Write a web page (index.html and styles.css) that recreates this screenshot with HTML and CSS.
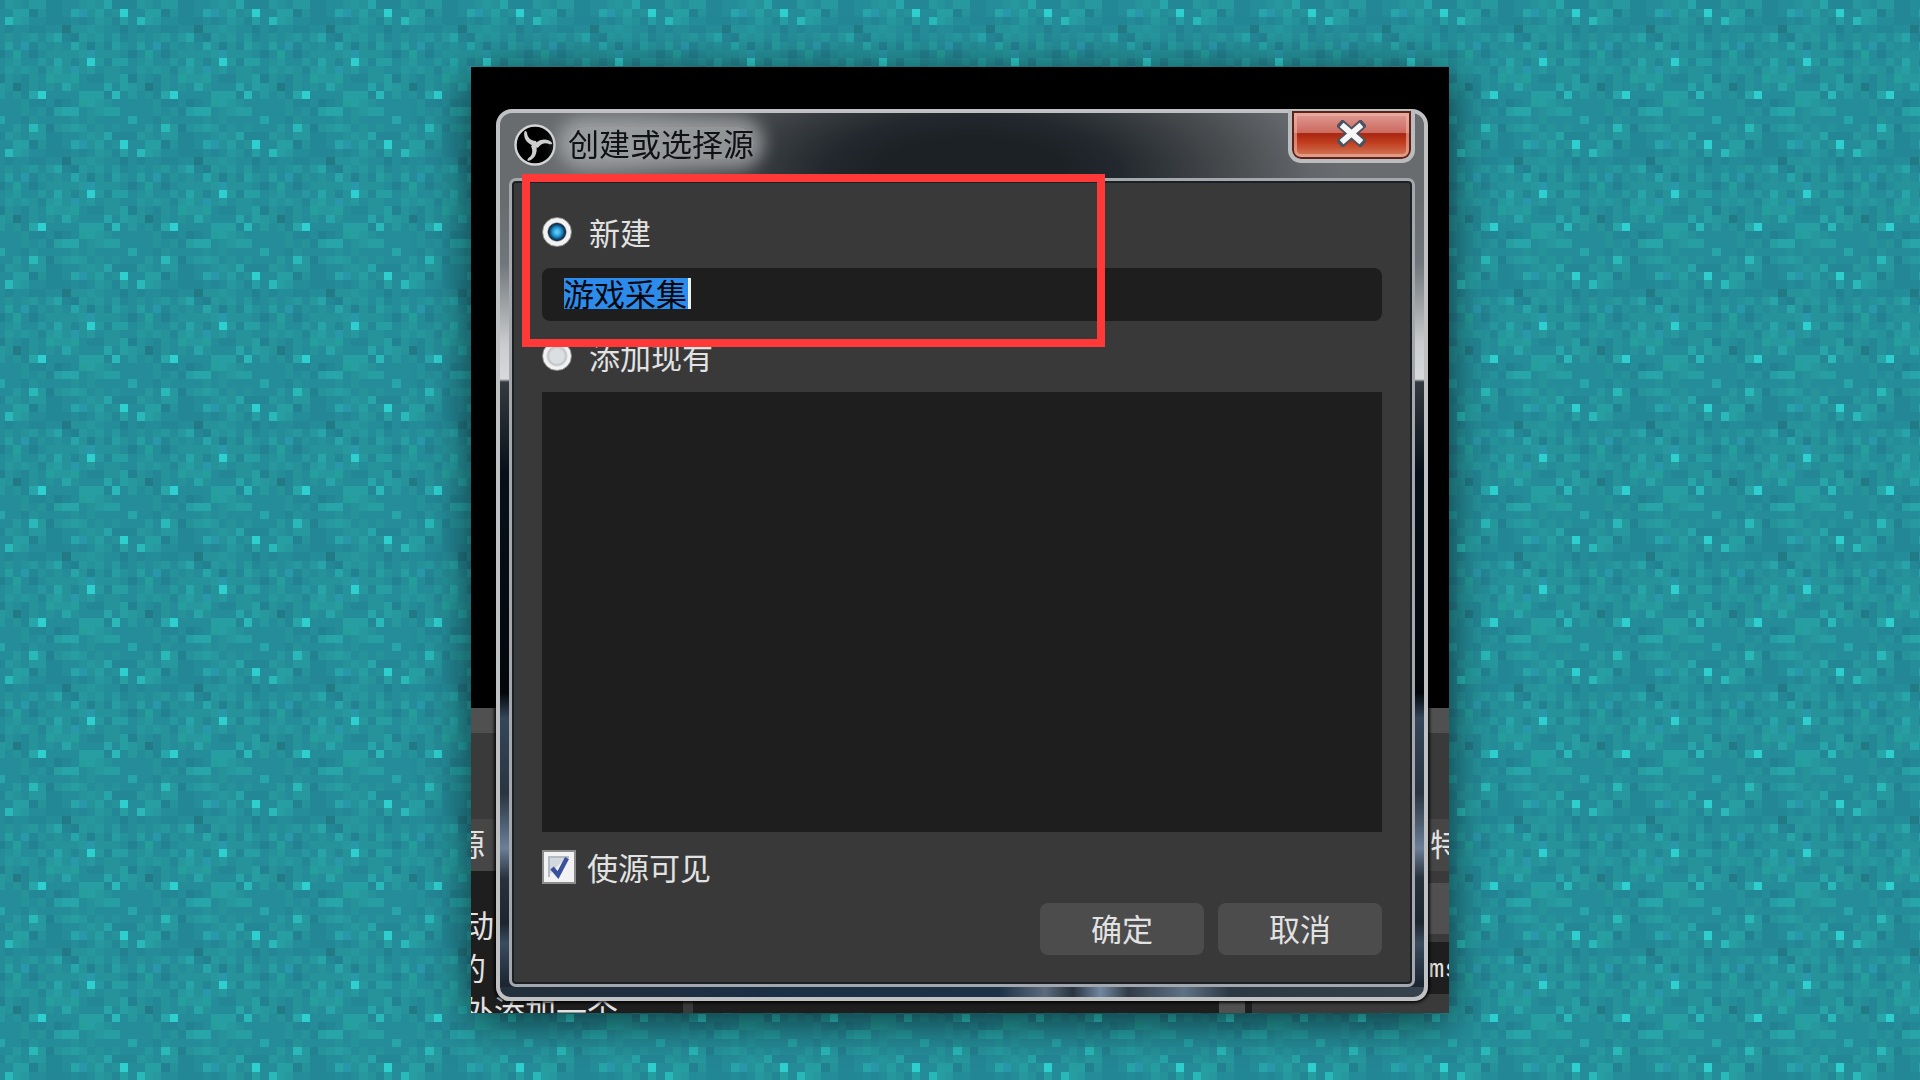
FILE: index.html
```
<!DOCTYPE html>
<html lang="zh-CN">
<head>
  <meta charset="utf-8">
  <meta name="viewport" content="width=device-width, initial-scale=1">
  <title>创建或选择源</title>
  <link rel="stylesheet" href="styles.css">
</head>
<body>
  <canvas class="mosaic" aria-hidden="true"></canvas>
  <main class="capture">
    <div class="backdrop" aria-hidden="true">
      <div class="preview"></div>
      <div class="splitter"></div>
      <div class="toolbar"></div>
      <div class="docks">
        <section class="dock dock-sources">
          <div class="dock-title">源</div>
          <div class="dock-body">
            <p>动</p>
            <p>的</p>
            <p>外添加一个</p>
          </div>
        </section>
        <section class="dock dock-mixer"></section>
        <section class="dock-grip"></section>
        <section class="dock dock-effects">
          <div class="dock-title">特</div>
          <div class="dock-select"></div>
          <div class="dock-field">ms</div>
        </section>
      </div>
    </div>

    <form class="dialog" onsubmit="return false">
      <header class="titlebar">
        <svg class="logo" viewBox="0 0 42 42" aria-hidden="true">
          <circle cx="21" cy="21" r="19.5" fill="#000" stroke="#d4d5d6" stroke-width="2.4"/>
          <g fill="#cfcfcf">
            <path d="M19 21.500C12 19 9 13 10.500 7.500C11.500 6 13 7.500 13.200 10C13.800 13.500 16.500 16.500 22 17L23.500 21Z"/>
            <path d="M19 21.500C12 19 9 13 10.500 7.500C11.500 6 13 7.500 13.200 10C13.800 13.500 16.500 16.500 22 17L23.500 21Z" transform="rotate(120 21 21)"/>
            <path d="M19 21.500C12 19 9 13 10.500 7.500C11.500 6 13 7.500 13.200 10C13.800 13.500 16.500 16.500 22 17L23.500 21Z" transform="rotate(240 21 21)"/>
          </g>
        </svg>
        <h1 class="title">创建或选择源</h1>
        <button class="close" type="button" aria-label="关闭">
          <svg viewBox="0 0 30 28" aria-hidden="true">
            <path d="M6 6L24 22M24 6L6 22" fill="none" stroke="#4d5260" stroke-width="10" stroke-linecap="square"/>
            <path d="M7 7L23 21M23 7L7 21" fill="none" stroke="#f6f6f6" stroke-width="6" stroke-linecap="square"/>
          </svg>
        </button>
      </header>
      <div class="panel">
        <label class="option"><input class="radio" type="radio" name="mode" checked>新建</label>
        <input class="name" type="text" value="游戏采集" aria-label="名称">
        <label class="option"><input class="radio" type="radio" name="mode">添加现有</label>
        <div class="list" role="listbox" aria-label="现有源"></div>
        <label class="option option-check"><input class="check" type="checkbox" checked>使源可见</label>
        <div class="actions">
          <button class="action" type="submit">确定</button>
          <button class="action" type="button">取消</button>
        </div>
        <div class="highlight" aria-hidden="true"></div>
      </div>
    </form>
  </main>
  <script src="mosaic.js"></script>
</body>
</html>
```
FILE: styles.css
```
* {
  box-sizing: border-box;
}

body {
  margin: 0;
  min-height: 100vh;
  padding: 67px 24px;
  display: flex;
  justify-content: center;
  background: #25929c;
  font: 31px/40px "Noto Sans CJK SC", sans-serif;
  color: #e2e2e2;
}

button,
input {
  font: inherit;
  color: inherit;
  margin: 0;
}

.mosaic {
  position: fixed;
  inset: 0;
  width: 100%;
  height: 100%;
}

.capture {
  position: relative;
  display: flex;
  width: 100%;
  max-width: 978px;
  background: #000;
  box-shadow: 0 8px 40px rgba(0, 0, 0, 0.65);
}

/* Main window behind the dialog */
.backdrop {
  position: absolute;
  inset: 0;
  display: flex;
  flex-direction: column;
  overflow: hidden;
}

.preview {
  flex: 1;
}

.splitter {
  height: 25px;
  background: #505050;
}

.toolbar {
  height: 86px;
  background: #3a3a3a;
}

.docks {
  display: flex;
  height: 194px;
  background: #1e1e1e;
}

.dock {
  overflow: hidden;
}

.dock p {
  margin: 0;
}

.dock-title {
  height: 52px;
  padding-top: 4px;
  background: #464646;
}

.dock-sources {
  width: 212px;
}

.dock-sources .dock-title {
  text-indent: -17px;
}

.dock-body {
  padding-top: 31px;
  line-height: 43px;
  text-indent: -8px;
  white-space: nowrap;
}

.dock-body p:nth-child(2) {
  text-indent: -16px;
}

.dock-mixer {
  flex: 1;
  border-left: 10px solid #3a3a3a;
}

.dock-grip {
  width: 26px;
  background: #505050;
}

.dock-effects {
  width: 204px;
  border-left: 7px solid #1e1e1e;
  background: #3a3a3a;
  direction: rtl;
}

.dock-effects .dock-title {
  text-indent: -12px;
}

.dock-select {
  height: 51px;
  margin-top: 12px;
  background: #505050;
}

.dock-field {
  height: 52px;
  margin-top: 8px;
  padding-top: 8px;
  background: #1e1e1e;
  font: 26px/40px "Liberation Mono", monospace;
  text-indent: -11px;
}

/* Glass dialog */
.dialog {
  position: relative;
  flex: 1;
  min-width: 0;
  display: flex;
  flex-direction: column;
  margin: 42px 21px 12px 25px;
  padding: 0 9px 10px;
  border: 4px solid #bfc1c3;
  border-radius: 16px 16px 14px 14px;
  background:
    radial-gradient(ellipse 370px 150px at 51% 62px, #1c2126 25%, #22282d 40%, #4a4d50 72%, #63666a 92%, #696c6f) top / 100% 65px no-repeat,
    linear-gradient(90deg, #23303c, #1b2f45 30%, #1d3247 54%, #5b6b7d 59%, #273440 62%, #7187a0 65%, #303c48 68%, #5f7185 74%, #2c3844 79%, #36434f) bottom / 100% 10px no-repeat,
    linear-gradient(#696c6f 90px, #70767b 150px, #c9cbcc 230px, #d8d9da 266px, #343a3f 269px, #07101a 360px, #03070b 580px, #34465a 605px, #283541 680px, #6b7f98 735px, #28323d 765px, #1c2630 810px, #3a4c60 830px, #1c2733 870px);
  box-shadow: 0 0 3px 2px rgba(0, 0, 0, 0.8);
}

.titlebar {
  display: flex;
  height: 65px;
  padding: 0 0 0 5px;
}

.logo {
  width: 42px;
  height: 42px;
  margin-top: 11px;
}

.title {
  margin: 14px 0 19px 12px;
  font: inherit;
  line-height: 32px;
  color: #101114;
  background: rgba(170, 172, 174, 0.75);
  border-radius: 16px;
  box-shadow: 0 0 16px 10px rgba(170, 172, 174, 0.75);
  clip-path: inset(-14px -40px -19px -40px);
}

.close {
  display: grid;
  place-items: center;
  width: 127px;
  height: 53px;
  margin: -3px 0 0 auto;
  padding: 0 0 4px;
  border: 4px solid #babcbd;
  border-top-width: 1px;
  border-radius: 0 0 13px 13px;
  background: linear-gradient(#e0a199, #cd6b60 45%, #a92612 47%, #c03c1d 65%, #d68467);
  box-shadow: inset 0 0 0 2px #5c231d, inset 0 0 0 5px rgba(240, 180, 165, 0.6);
}

.close svg {
  width: 29px;
  height: 27px;
}

.panel {
  position: relative;
  flex: 1;
  display: flex;
  flex-direction: column;
  gap: 6px;
  padding: 22px 30px 29px;
  border: 3px solid #a4a8ac;
  border-radius: 7px;
  background: #393939;
  box-shadow: inset 0 0 0 2px #1b2024;
}

.option {
  display: flex;
  align-items: center;
  gap: 17px;
  height: 59px;
  padding-bottom: 2px;
}

.option-check {
  gap: 11px;
}

.radio {
  appearance: none;
  width: 30px;
  height: 30px;
  border: 1px solid #8a8a8a;
  border-radius: 50%;
  background: radial-gradient(circle, #dcdfe2 35%, #bfc3c7 46%, #f2f2f2 56%);
}

.radio:checked {
  background: radial-gradient(circle, #5cc4f2 8%, #1588c4 26%, #153a5c 38%, #1b2f45 43%, #f2f2f2 50%);
}

.name {
  height: 53px;
  padding: 0 21px 4px;
  border: 0;
  border-radius: 8px;
  outline: 0;
  color: #05080c;
  /* selected run of four characters, then the caret */
  background:
    linear-gradient(#2d8ceb, #2d8ceb) 22px 10px / 4em 1em no-repeat,
    linear-gradient(#f0f0f0, #f0f0f0) 22px 10px / calc(4em + 3px) 1em no-repeat,
    #1e1e1e;
}

.list {
  flex: 1;
  min-height: 440px;
  background: #1e1e1e;
}

.check {
  appearance: none;
  width: 34px;
  height: 34px;
  border: 2px solid #8d8d8d;
  background: #f2f2f2;
}

.check:checked {
  background: #f2f2f2 url("data:image/svg+xml,%3Csvg xmlns='http://www.w3.org/2000/svg' viewBox='0 0 30 30'%3E%3Cpath d='M5 25V5H25' fill='none' stroke='%23b4bac4' stroke-width='2'/%3E%3Cpath d='M6 6H22L6 22Z' fill='%23d3d8df'/%3E%3Cpath d='M8 16L14 23L23 6' fill='none' stroke='%233a529b' stroke-width='4.5'/%3E%3C/svg%3E") center / 30px 30px no-repeat;
}

.actions {
  display: flex;
  justify-content: flex-end;
  gap: 14px;
}

.action {
  width: 164px;
  height: 52px;
  padding: 0 0 2px;
  border: 0;
  border-radius: 8px;
  background: #4c4c4c;
}

/* Annotation frame around the first option */
.highlight {
  position: absolute;
  top: -7px;
  left: 10px;
  width: 583px;
  height: 173px;
  border: 8px solid #ff3838;
  pointer-events: none;
}
```
FILE: mosaic.js
```
// Tiled 16 x 16 mosaic; each character picks a tone.
const TONES = {
  0: '#227a87', 1: '#238291', 2: '#248796', 3: '#258d99', 4: '#26939b',
  5: '#26989e', 6: '#269ea2', 7: '#27a5a9', 8: '#2ab8b8', 9: '#30cfcf',
  g: '#259f9b', b: '#2a98ab'
};
const ROWS = [
  '2543552233454722', '3366142237b46349', '3865332223235426', '3233223304454331',
  '3434535721545352', '363b243437414264', '13g31344445b4443', '3453353742495266',
  '354542564b453443', '143243g55g322446', '5402434374333736', '5342793333666283',
  '3334223123g65433', '3334342677345663', '7332433334343333', '3353851456534343'
];
const canvas = document.querySelector('.mosaic');

function paint() {
  const ctx = canvas.getContext('2d');
  const w = canvas.width = window.innerWidth;
  const h = canvas.height = window.innerHeight;
  const cellW = 8.25;
  const cellH = 8.24;
  for (let r = 0; r * cellH < h + 8; r++) {
    const y0 = r ? Math.floor(r * cellH + 0.8) : 0;
    const y1 = Math.floor((r + 1) * cellH + 0.8);
    for (let c = 0; c * cellW - 4 < w; c++) {
      const x0 = Math.floor(c * cellW - 3.25);
      const x1 = Math.floor((c + 1) * cellW - 3.25);
      ctx.fillStyle = TONES[ROWS[r % 16][c % 16]];
      ctx.fillRect(x0, y0, x1 - x0, y1 - y0);
    }
  }
}

paint();
window.addEventListener('resize', paint);
```
